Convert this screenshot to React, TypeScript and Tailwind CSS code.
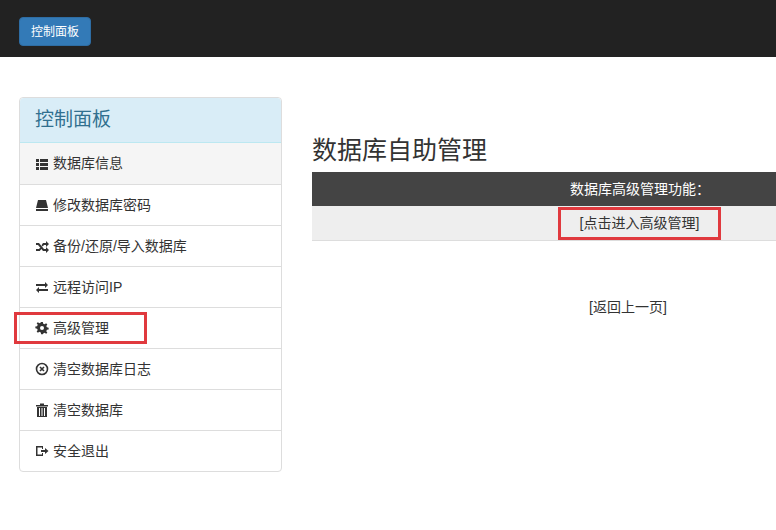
import React from "react";

const Icon = ({ children }: { children: React.ReactNode }) => (
  <svg width="14" height="14" viewBox="0 0 14 14" className="mr-[4px] shrink-0" fill="#333">{children}</svg>
);

const items: [React.ReactNode, string][] = [
  [<Icon><rect x="1" y="2" width="3" height="3"/><rect x="5" y="2" width="8" height="3"/><rect x="1" y="6" width="3" height="3"/><rect x="5" y="6" width="8" height="3"/><rect x="1" y="10" width="3" height="3"/><rect x="5" y="10" width="8" height="3"/></Icon>, "数据库信息"],
  [<Icon><path d="M3 2h8l2 8H1z"/><rect x="1" y="11" width="12" height="2"/></Icon>, "修改数据库密码"],
  [<Icon><path d="M1 4h3l5 6h2V8l3 3-3 3v-2H8L3 6H1zM1 10h3l1.5-1.8 1.2 1.4L4.8 12H1zM8 4h3V2l3 3-3 3V6H9L7.7 7.6 6.5 6.2z"/></Icon>, "备份/还原/导入数据库"],
  [<Icon><path d="M1 4h9V2l3 3-3 3V6H1zM13 9H4V7L1 10l3 3v-2h9z"/></Icon>, "远程访问IP"],
  [<Icon><path d="M6 1h2l.4 2 1.6.7 1.7-1.2 1.4 1.4-1.2 1.7.7 1.6 2 .4v2l-2 .4-.7 1.6 1.2 1.7-1.4 1.4-1.7-1.2-1.6.7L8 15H6l-.4-2-1.6-.7-1.7 1.2-1.4-1.4 1.2-1.7L1.4 8.8-.6 8.4v-2l2-.4.7-1.6L.9 2.7 2.3 1.3 4 2.5l1.6-.7z" transform="scale(0.875) translate(1,0)"/><circle cx="7" cy="7" r="2" fill="#fff"/></Icon>, "高级管理"],
  [<Icon><circle cx="7" cy="7" r="5.5" fill="none" stroke="#333" strokeWidth="1.6"/><path d="M5 5l4 4M9 5l-4 4" stroke="#333" strokeWidth="1.6"/></Icon>, "清空数据库日志"],
  [<Icon><rect x="1" y="2" width="12" height="1.5"/><rect x="5" y="0.5" width="4" height="2"/><path d="M2 4h10v10H2z"/><path d="M4.5 5v8M7 5v8M9.5 5v8" stroke="#fff" strokeWidth="1"/></Icon>, "清空数据库"],
  [<Icon><path d="M1 2h7v3H7V3.5H2.5v7H7V9h1v3H1z"/><path d="M6 6h4V4l3.5 3L10 10V8H6z"/></Icon>, "安全退出"],
];

export default function App() {
  return (
    <div className="w-[776px] h-[530px] overflow-hidden bg-white text-[#333]" style={{ fontFamily: '"Liberation Sans","Noto Sans CJK SC",sans-serif' }}>
      <div className="h-[57px] bg-[#222] pl-[19px] pt-[17px]">
        <div className="inline-flex items-center h-[29px] px-[11px] rounded-[4px] bg-[#337ab7] text-white text-[12px] border border-[#2e6da4]">控制面板</div>
      </div>
      <div className="flex pt-[40px]">
        <div className="ml-[19px] w-[263px] shrink-0 border border-[#ddd] rounded-[4px]">
          <div className="h-[45px] bg-[#d9edf7] text-[#31708f] text-[19px] flex items-center pl-[15px] border-b border-[#bce8f1] rounded-t-[4px]">控制面板</div>
          {items.map(([ic, t], i) => (
            <div key={t} className={`relative h-[41px] flex items-center pl-[15px] text-[14px] ${i ? "border-t border-[#ddd]" : ""} ${i === 0 ? "bg-[#f5f5f5]" : ""}`}>
              {ic}{t}
              {i === 4 && <div className="absolute left-[-6px] top-[4px] w-[133px] h-[32px] border-[3px] border-[#e0393e]" />}
            </div>
          ))}
        </div>
        <div className="ml-[30px] w-[656px] shrink-0 pt-[38px]">
          <div className="text-[25px] leading-[30px] h-[37px]">数据库自助管理</div>
          <div className="h-[34px] bg-[#444] text-white text-[14px] flex items-center justify-center">数据库高级管理功能：</div>
          <div className="h-[35px] bg-[#eee] border-b border-[#ddd] flex items-center justify-center text-[14px]">
            <div className="relative px-[19px] h-[33px] flex items-center border-[3px] border-[#e0393e] -ml-[1px]">[点击进入高级管理]</div>
          </div>
          <div className="mt-[56px] text-center text-[14px] pr-[24px]">[返回上一页]</div>
        </div>
      </div>
    </div>
  );
}
